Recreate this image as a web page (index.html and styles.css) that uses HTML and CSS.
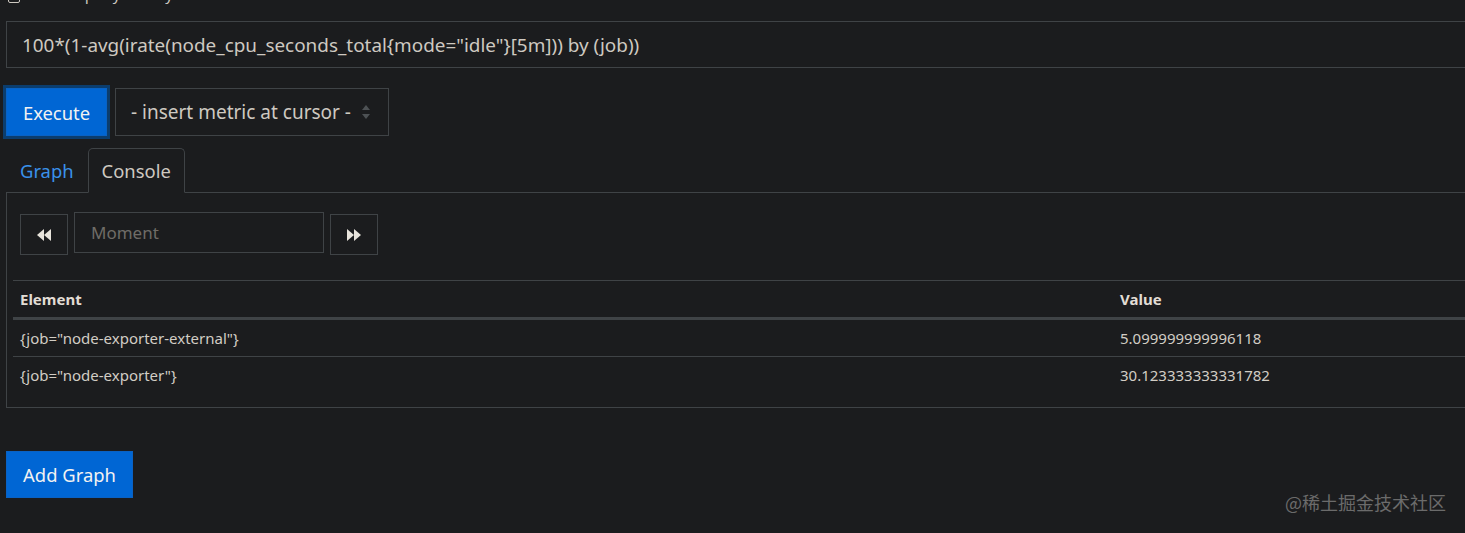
FILE: index.html
```html
<!DOCTYPE html>
<html lang="en">
<head>
<meta charset="utf-8">
<title>Prometheus Console</title>
<link rel="stylesheet" href="styles.css">
</head>
<body>
<div class="page">
  <div class="history-row">
    <span class="checkbox"></span>
    <span class="history-label">Enable query history</span>
  </div>

  <div class="query">100*(1-avg(irate(node_cpu_seconds_total{mode="idle"}[5m])) by (job))</div>

  <div class="actions">
    <button class="btn btn-primary btn-exec">Execute</button>
    <div class="select">
      <span>- insert metric at cursor -</span>
      <svg class="select-arrows" width="10" height="16" viewBox="0 0 10 16">
        <path d="M5 1 L9 6 L1 6 Z" fill="#4d5154"/>
        <path d="M5 15 L9 10 L1 10 Z" fill="#4d5154"/>
      </svg>
    </div>
  </div>

  <div class="tabs">
    <span class="tab tab-link">Graph</span>
    <span class="tab tab-active">Console</span>
  </div>

  <div class="panel">
    <div class="controls">
      <button class="icon-btn" aria-label="previous">
        <svg width="16" height="14" viewBox="0 0 16 14">
          <path d="M8 1 L1 7 L8 13 Z" fill="#e8e4dc"/>
          <path d="M15 1 L8 7 L15 13 Z" fill="#e8e4dc"/>
        </svg>
      </button>
      <div class="moment">Moment</div>
      <button class="icon-btn" aria-label="next">
        <svg width="16" height="14" viewBox="0 0 16 14">
          <path d="M1 1 L8 7 L1 13 Z" fill="#e8e4dc"/>
          <path d="M8 1 L15 7 L8 13 Z" fill="#e8e4dc"/>
        </svg>
      </button>
    </div>

    <table class="results">
      <thead>
        <tr><th class="col-el">Element</th><th>Value</th></tr>
      </thead>
      <tbody>
        <tr><td>{job="node-exporter-external"}</td><td>5.099999999996118</td></tr>
        <tr class="last"><td>{job="node-exporter"}</td><td>30.123333333331782</td></tr>
      </tbody>
    </table>
  </div>

  <button class="btn btn-primary btn-add">Add Graph</button>
</div>
<div class="watermark">@稀土掘金技术社区</div>
</body>
</html>
```

FILE: styles.css
```css
html, body {
  margin: 0;
  padding: 0;
  background: #1b1c1e;
  overflow: hidden;
  height: 533px;
}

body {
  font-family: "Noto Sans", "Open Sans", "Liberation Sans", sans-serif;
  color: #cdc8c0;
  position: relative;
}

.page {
  width: 1500px;
  padding-left: 6px;
}

.history-row {
  margin-top: -16px;
  height: 20px;
  display: flex;
  align-items: center;
  gap: 8px;
  font-size: 15px;
  line-height: 20px;
  padding-left: 2px;
  color: #cdc8c0;
}

.checkbox {
  width: 12px;
  height: 12px;
  border: 1px solid #cdc8c0;
  border-radius: 2px;
  box-sizing: border-box;
  margin-top: 6px;
}

.query {
  margin-top: 17px;
  height: 47px;
  box-sizing: border-box;
  border: 1px solid #3f4346;
  padding-left: 15px;
  display: flex;
  align-items: center;
  font-size: 18.9px;
  color: #cec9c1;
}

.actions {
  margin-top: 20px;
  display: flex;
  gap: 8px;
  align-items: stretch;
}

.btn {
  font-family: inherit;
  border: 1px solid transparent;
  color: #f2f2f2;
  cursor: pointer;
  padding: 0 16px;
  font-size: 18.4px;
  border-radius: 0;
}

.btn-primary {
  background: #0066d4;
  border-color: #0a62c4;
}

.btn-exec {
  height: 48px;
  width: 101px;
  padding: 0;
  box-shadow: 0 0 0 3px #0b3d6e;
}

.select {
  width: 274px;
  height: 48px;
  box-sizing: border-box;
  border: 1px solid #3f4346;
  display: flex;
  align-items: center;
  justify-content: space-between;
  padding: 0 17px 0 15px;
  font-size: 19px;
  color: #cec9c1;
}

.select-arrows {
  display: block;
}

.tabs {
  margin-top: 12px;
  display: flex;
  height: 44px;
  position: relative;
  z-index: 1;
}

.tab {
  box-sizing: border-box;
  height: 45px;
  padding: 0 13px;
  display: flex;
  align-items: center;
  font-size: 18.4px;
  border: 1px solid transparent;
  border-top-left-radius: 5px;
  border-top-right-radius: 5px;
}

.tab-link {
  color: #3a91ea;
}

.tab-active {
  border-color: #3f4346;
  border-bottom-color: #1b1c1e;
  background: #1b1c1e;
  color: #cec9c1;
}

.panel {
  border: 1px solid #3f4346;
  height: 216px;
  box-sizing: border-box;
  padding-left: 6px;
}

.controls {
  display: flex;
  align-items: flex-start;
  gap: 6px;
  padding: 19px 0 0 7px;
  height: 42px;
}

.icon-btn {
  margin-top: 2px;
  width: 48px;
  height: 41px;
  background: transparent;
  border: 1px solid #3f4346;
  display: flex;
  align-items: center;
  justify-content: center;
  padding: 0;
}

.moment {
  width: 250px;
  height: 41px;
  box-sizing: border-box;
  border: 1px solid #3f4346;
  padding-left: 16px;
  display: flex;
  align-items: center;
  font-size: 17px;
  color: #6f6c67;
}

.results {
  margin-top: 26px;
  width: 1480px;
  border-collapse: collapse;
  font-size: 15px;
  color: #d2cdc5;
}

.results th,
.results td {
  text-align: left;
  padding: 0 7px;
  border-top: 1px solid #3f4346;
}

.results th {
  height: 36px;
  font-weight: 700;
  color: #e2ddd5;
  border-bottom: 3px solid #3f4346;
}

.results td {
  height: 36px;
}

.results tr:first-child td {
  border-top: none;
}

.col-el {
  width: 1086px;
}

.btn-add {
  margin-top: 43px;
  height: 47px;
  width: 127px;
  padding: 0;
}

.watermark {
  position: absolute;
  top: 490px;
  left: 1285px;
  font-size: 18px;
  line-height: 24px;
  color: #6b6b6b;
  font-family: "Noto Sans CJK SC", "Noto Sans", sans-serif;
  white-space: nowrap;
}
```
